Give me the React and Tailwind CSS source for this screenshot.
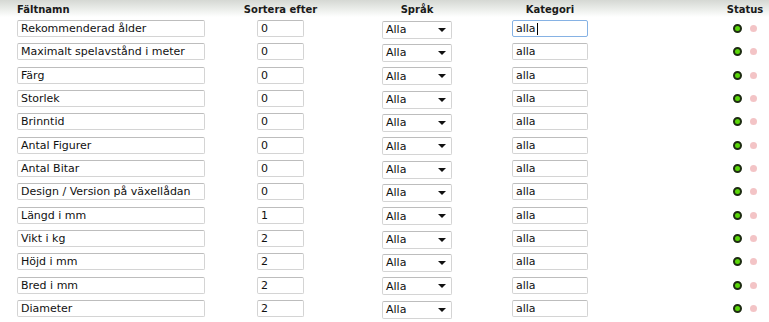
import React from 'react';

const rows = [
    ['Rekommenderad ålder', '0'],
    ['Maximalt spelavstånd i meter', '0'],
    ['Färg', '0'],
    ['Storlek', '0'],
    ['Brinntid', '0'],
    ['Antal Figurer', '0'],
    ['Antal Bitar', '0'],
    ['Design / Version på växellådan', '0'],
    ['Längd i mm', '1'],
    ['Vikt i kg', '2'],
    ['Höjd i mm', '2'],
    ['Bred i mm', '2'],
    ['Diameter', '2'],
];

const grid = 'grid grid-cols-[230px_101px_172px_94px_124px_48px] items-center';
const base = 'h-[17px] bg-white border rounded-[2px] px-[3px] text-[11px] leading-[15px] text-[#111] flex items-center';
const box = `${base} border-[#d4d4d4] border-t-[#bdbdbd]`;

const App = () => {
    return (
        <div className="w-[769px] h-[322px] bg-white overflow-hidden font-['DejaVu_Sans',Verdana,sans-serif]">
            <div className={`${grid} h-[17px] bg-gradient-to-b from-[#d5d8d3] via-[#eef0ed] via-60% to-white text-[10px] font-bold text-[#1a1a1a]`}>
                <div className="pl-[17px] self-start pt-[2px]">Fältnamn</div>
                <div className="text-center self-start pt-[2px]">Sortera efter</div>
                <div className="text-center self-start pt-[2px]">Språk</div>
                <div className="text-center self-start pt-[2px]">Kategori</div>
                <div />
                <div className="text-center self-start pt-[2px]">Status</div>
            </div>

            {rows.map(([name, sort], i) => (
                <div key={name} className={`${grid} h-[23.33px]`}>
                    <div className="pl-[17px]">
                        <div className={`${box} w-[188px]`}>{name}</div>
                    </div>
                    <div className="flex justify-center">
                        <div className={`${box} w-[47px]`}>{sort}</div>
                    </div>
                    <div className="flex justify-center">
                        <div className={`${box} w-[70px] h-[18px] mt-[2px] justify-between pr-[5px]`}>
                            <span>Alla</span>
                            <span className="w-0 h-0 border-l-[4px] border-r-[4px] border-t-[4px] border-l-transparent border-r-transparent border-t-[#111]" />
                        </div>
                    </div>
                    <div className="flex justify-center">
                        {i === 0 ? (
                            <div className={`${base} w-[76px] border-[#86b2e4]`}>
                                alla<span className="inline-block w-px h-[12px] bg-black ml-px" />
                            </div>
                        ) : (
                            <div className={`${box} w-[76px]`}>alla</div>
                        )}
                    </div>
                    <div />
                    <div className="flex items-center justify-center gap-[8px]">
                        <span className="w-[9px] h-[9px] rounded-full bg-[#5ad60a] border-2 border-[#1d2b12]" />
                        <span className="w-[7px] h-[7px] rounded-full bg-[#f3c4c6]" />
                    </div>
                </div>
            ))}
        </div>
    );
};

export default App;
